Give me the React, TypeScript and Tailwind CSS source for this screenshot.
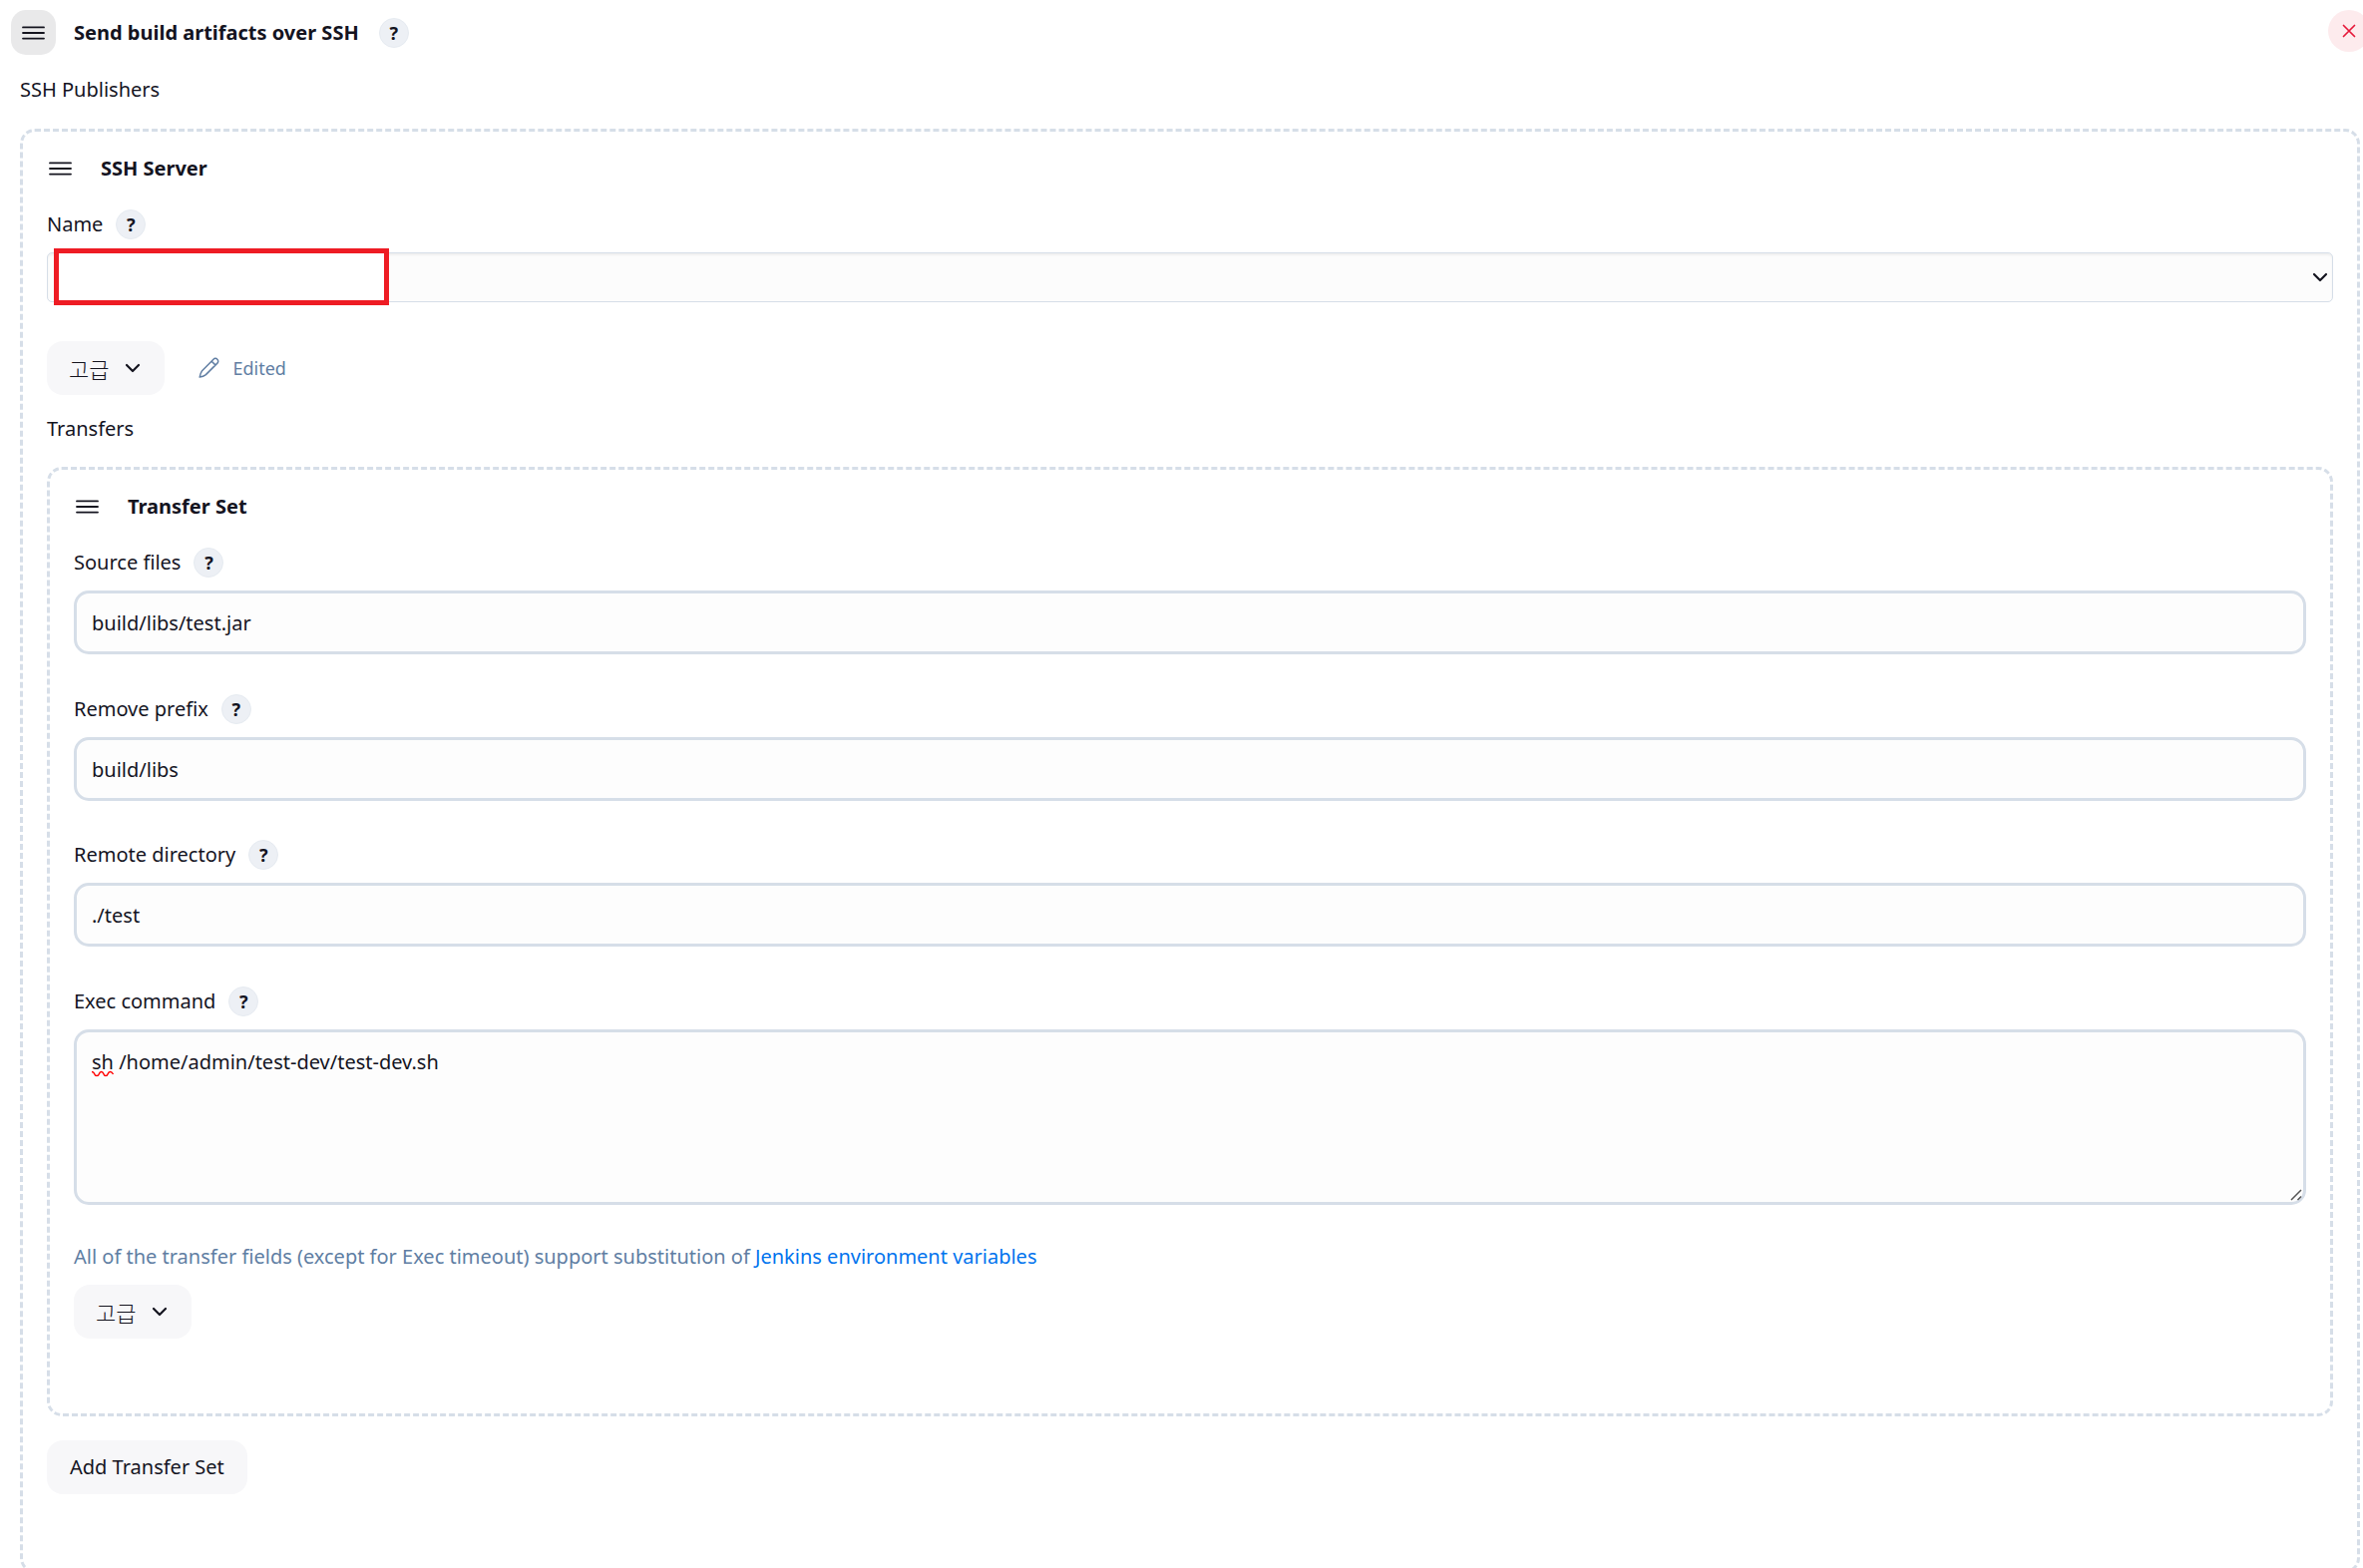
import type { ReactNode } from 'react';

function GripIcon() {
  return (
    <svg width="23" height="14" viewBox="0 0 23 14" fill="none" stroke="#14141f" strokeWidth="1.8" strokeLinecap="round" aria-hidden="true">
      <path d="M1 1.4h21M1 7h21M1 12.6h21" />
    </svg>
  );
}

function ChevronIcon() {
  return (
    <svg width="16" height="10" viewBox="0 0 16 10" fill="none" stroke="#14141f" strokeWidth="2.2" strokeLinecap="round" strokeLinejoin="round" aria-hidden="true">
      <path d="M2 2l6 6 6-6" />
    </svg>
  );
}

function PencilIcon() {
  return (
    <svg width="22" height="22" viewBox="0 0 22 22" fill="none" stroke="#607ea3" strokeWidth="1.5" strokeLinecap="round" strokeLinejoin="round" aria-hidden="true">
      <path d="M15 2.2a2.7 2.7 0 0 1 3.9 0a2.7 2.7 0 0 1 0 3.9L7.4 17.6C5.6 19 3.6 19.7 1.2 20.1C1.6 17.6 2.3 15.6 3.6 13.7zM13.2 4.2l3.7 3.7" />
    </svg>
  );
}

function Help({ topic }: { topic: string }) {
  return (
    <button
      type="button"
      aria-label={`Help for ${topic}`}
      className="flex size-[30px] shrink-0 items-center justify-center rounded-full border border-[#e6ebf1] bg-[#edf0f5] text-[18px] leading-none font-bold"
    >
      ?
    </button>
  );
}

function LabelRow({ id, text, className }: { id: string; text: string; className: string }) {
  return (
    <div className={`flex h-[30px] items-center gap-[13px] ${className}`}>
      <label htmlFor={id}>{text}</label>
      <Help topic={text} />
    </div>
  );
}

function BlockTitle({ children }: { children: ReactNode }) {
  return (
    <div className="flex h-[30px] items-center gap-[29px] pl-0.5">
      <GripIcon />
      <h3 className="font-bold">{children}</h3>
    </div>
  );
}

function AdvancedButton() {
  return (
    <button type="button" className="flex h-[54px] items-center gap-4 rounded-2xl bg-[#f7f7f9] pr-6 pl-[22px]">
      <span className="font-['Noto_Sans_CJK_KR',sans-serif] text-[22px] font-light">고급</span>
      <ChevronIcon />
    </button>
  );
}

function TextField({ id, label, value, className }: { id: string; label: string; value: string; className: string }) {
  return (
    <>
      <LabelRow id={id} text={label} className={className} />
      <input
        id={id}
        type="text"
        defaultValue={value}
        className="mt-[13px] block h-16 w-full rounded-[15px] border-3 border-[#d6dee8] bg-[#fdfdfd] px-[15px] outline-none"
      />
    </>
  );
}

export default function App() {
  return (
    <main className="h-screen overflow-hidden bg-white pt-2.5 font-['Noto_Sans','Noto_Sans_CJK_KR',sans-serif] text-[20px] leading-[30px] text-[#14141f]">
      <header className="flex items-start justify-between pl-[11px]">
        <div className="flex items-center">
          <button type="button" aria-label="Drag step" className="flex size-[45px] items-center justify-center rounded-[15px] bg-[#e9e9ea]">
            <GripIcon />
          </button>
          <h2 className="mr-5 ml-[18px] font-bold">Send build artifacts over SSH</h2>
          <Help topic="Send build artifacts over SSH" />
        </div>
        <button type="button" aria-label="Delete step" className="-mr-[7px] flex size-[42px] shrink-0 items-center justify-center rounded-full bg-[#fdebed]">
          <svg width="14" height="14" viewBox="0 0 14 14" fill="none" stroke="#e6183a" strokeWidth="1.7" strokeLinecap="round" aria-hidden="true">
            <path d="M1.5 1.5l11 11M12.5 1.5l-11 11" />
          </svg>
        </button>
      </header>

      <div className="pt-5 pr-[3px] pl-5">
        <p>SSH Publishers</p>

        <section className="mt-6 rounded-[15px] border-3 border-dashed border-[#d6dee8] px-6 pt-[22px] pb-[76px]">
          <BlockTitle>SSH Server</BlockTitle>
          <LabelRow id="server" text="Name" className="mt-[26px]" />
          <div className="relative mt-[13px]">
            <select
              id="server"
              defaultValue=""
              className="block h-[50px] w-full appearance-none rounded-[5px] border border-[#d6dee8] bg-[#fcfcfc] px-4 shadow-[inset_0_2px_2px_rgba(0,0,0,0.05)] outline-none"
            >
              <option value=""></option>
            </select>
            <span className="pointer-events-none absolute inset-y-0 right-[5px] flex items-center">
              <ChevronIcon />
            </span>
            <span className="pointer-events-none absolute -top-1 left-[7px] h-[57px] w-[336px] border-5 border-[#ee1c24] bg-white" />
          </div>

          <div className="mt-[39px] flex items-center">
            <AdvancedButton />
            <span className="ml-[34px] flex items-center gap-3 text-[18px] text-[#607ea3]">
              <PencilIcon />
              Edited
            </span>
          </div>

          <p className="mt-[19px]">Transfers</p>

          <section className="mt-[23px] rounded-[15px] border-3 border-dashed border-[#d6dee8] px-6 pt-[22px] pb-[75px]">
            <BlockTitle>Transfer Set</BlockTitle>
            <TextField id="source" label="Source files" value="build/libs/test.jar" className="mt-[26px]" />
            <TextField id="prefix" label="Remove prefix" value="build/libs" className="mt-10" />
            <TextField id="directory" label="Remote directory" value="./test" className="mt-[39px]" />

            <LabelRow id="command" text="Exec command" className="mt-10" />
            <div className="relative mt-[13px]">
              <textarea
                id="command"
                spellCheck={false}
                defaultValue="sh /home/admin/test-dev/test-dev.sh"
                className="block h-44 w-full resize-none rounded-[15px] border-3 border-[#d6dee8] bg-[#fdfdfd] px-[15px] py-[15px] outline-none"
              />
              <svg className="pointer-events-none absolute top-[41px] left-[18px]" width="22" height="7" viewBox="0 0 22 7" fill="none" stroke="#f00" strokeWidth="1.4" aria-hidden="true">
                <path d="M0 1.5Q2 1.5 2.6 3.5T5 5.5T7.4 3.5T9.6 1.5T11.8 3.5T14 5.5T16.2 3.5T18.5 1.5T21.5 4" />
              </svg>
              <svg className="pointer-events-none absolute right-1 bottom-1" width="12" height="12" viewBox="0 0 12 12" fill="none" stroke="#555" strokeWidth="1.5" aria-hidden="true">
                <path d="M1 11L11 1M7.5 11L11 7.5" />
              </svg>
            </div>

            <p className="mt-[37px] text-[#607ea3]">
              All of the transfer fields (except for Exec timeout) support substitution of{' '}
              <a href="#environment-variables" className="text-[#0073ee]">Jenkins environment variables</a>
            </p>
            <div className="mt-[13px]">
              <AdvancedButton />
            </div>
          </section>

          <button type="button" className="mt-6 h-[54px] rounded-2xl bg-[#f7f7f9] px-[23px]">
            Add Transfer Set
          </button>
        </section>
      </div>
    </main>
  );
}
